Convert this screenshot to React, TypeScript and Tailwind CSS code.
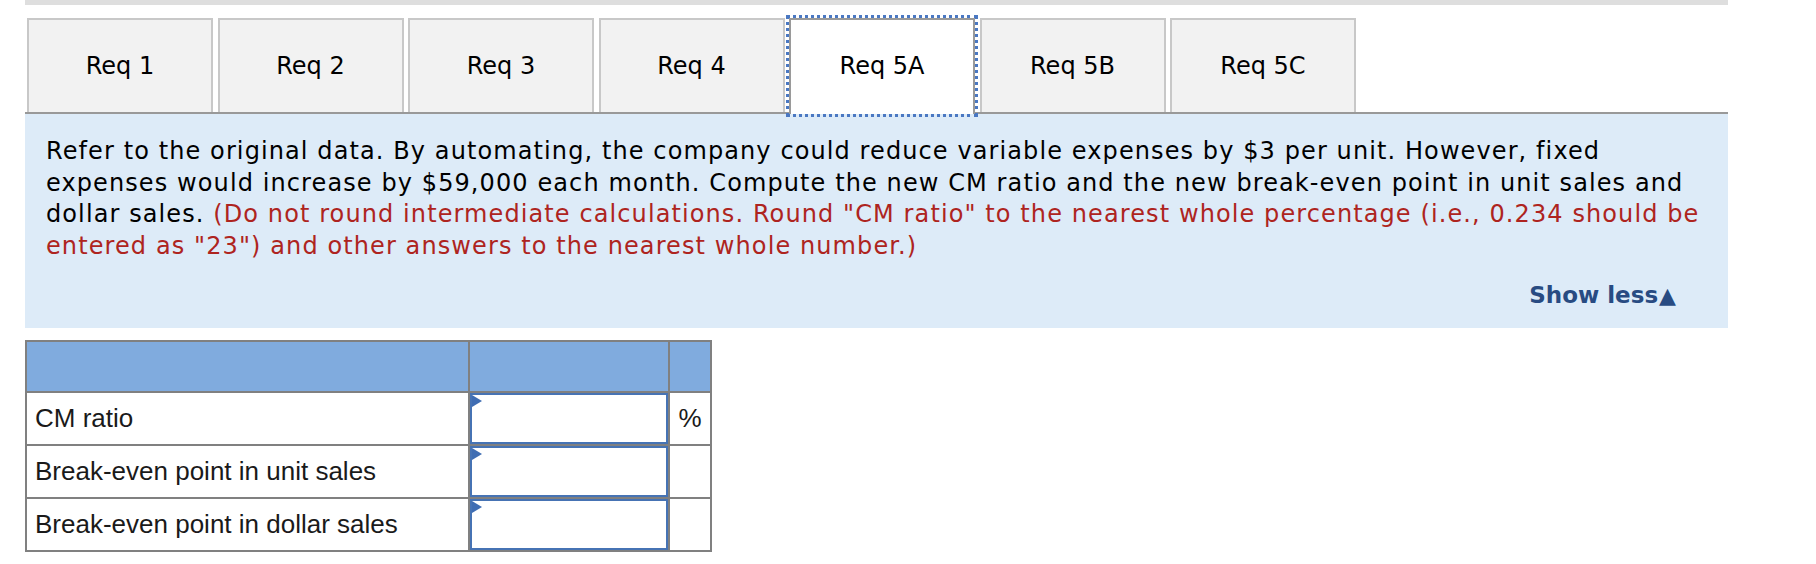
import React from "react"

const tabs = ["Req 1", "Req 2", "Req 3", "Req 4", "Req 5A", "Req 5B", "Req 5C"]
const activeTab = "Req 5A"

const rows = [
  { label: "CM ratio", unit: "%" },
  { label: "Break-even point in unit sales", unit: "" },
  { label: "Break-even point in dollar sales", unit: "" },
]

function AnswerInput() {
  return (
    <div className="relative h-full w-full border-2 border-[#4673b4] bg-white">
      {/* little marker in the corner of each answer box */}
      <span className="absolute left-0 top-0 h-0 w-0 border-y-[6px] border-l-[10px] border-y-transparent border-l-[#3f6db3]" />
      <input className="h-full w-full bg-transparent px-2 outline-none" aria-label="answer" />
    </div>
  )
}

export default function App() {
  return (
    <div className="h-[564px] w-[1816px] bg-white">
      <div className="ml-[25px] h-[5px] w-[1703px] bg-[#dedede]" />

      {/* Tabs */}
      <div className="ml-[27px] mt-[13px] flex h-[94px] gap-[4.5px] font-['DejaVu_Sans',sans-serif] text-[24px] text-black">
        {tabs.map((t) =>
          t === activeTab ? (
            <button
              key={t}
              className="relative z-10 flex h-[96px] w-[186px] items-center justify-center border-2 border-b-0 border-[#9a9a9a] bg-white pb-[2px] outline-[3px] outline-dotted outline-[#4a78c2]"
            >
              {t}
            </button>
          ) : (
            <button
              key={t}
              className="flex h-[94px] w-[186px] items-center justify-center border-2 border-b-0 border-[#c8c8c8] bg-[#f2f2f2]"
            >
              {t}
            </button>
          )
        )}
      </div>

      {/* Question box */}
      <div className="ml-[25px] h-[216px] w-[1703px] border-t-2 border-[#999999] bg-[#ddebf8] font-['DejaVu_Sans',sans-serif]">
        <p className="whitespace-nowrap pl-[21px] pt-[22px] text-[24px] leading-[31.6px] tracking-[1.1px] text-black">
          Refer to the original data. By automating, the company could reduce variable expenses by $3 per unit. However, fixed
          <br />
          expenses would increase by $59,000 each month. Compute the new CM ratio and the new break-even point in unit sales and
          <br />
          dollar sales.{" "}
          <span className="text-[#ae2420]">
            (Do not round intermediate calculations. Round "CM ratio" to the nearest whole percentage (i.e., 0.234 should be
            <br />
            entered as "23") and other answers to the nearest whole number.)
          </span>
        </p>
        <div className="mt-[16px] flex justify-end pr-[52px]">
          <button className="flex items-center text-[23px] font-bold text-[#284b82]">
            Show less<span className="ml-[1px] text-[22px] leading-none">▲</span>
          </button>
        </div>
      </div>

      {/* Answer table */}
      <div className="ml-[25px] mt-[12px] w-[687px] border-2 border-[#808080] font-['Liberation_Sans',Arial,sans-serif] text-[26px] text-[#1a1a1a]">
        <div className="flex h-[49px] bg-[#80abde]">
          <div className="w-[441px]" />
          <div className="w-[200px] border-l-2 border-[#808080]" />
          <div className="w-[42px] border-l-2 border-[#808080]" />
        </div>
        {rows.map((r) => (
          <div key={r.label} className="flex h-[53px] border-t-2 border-[#808080]">
            <div className="flex w-[441px] items-center pl-[8px]">{r.label}</div>
            <div className="w-[200px] border-l-2 border-[#808080]">
              <AnswerInput />
            </div>
            <div className="flex w-[42px] items-center justify-center border-l-2 border-[#808080]">{r.unit}</div>
          </div>
        ))}
      </div>
    </div>
  )
}
